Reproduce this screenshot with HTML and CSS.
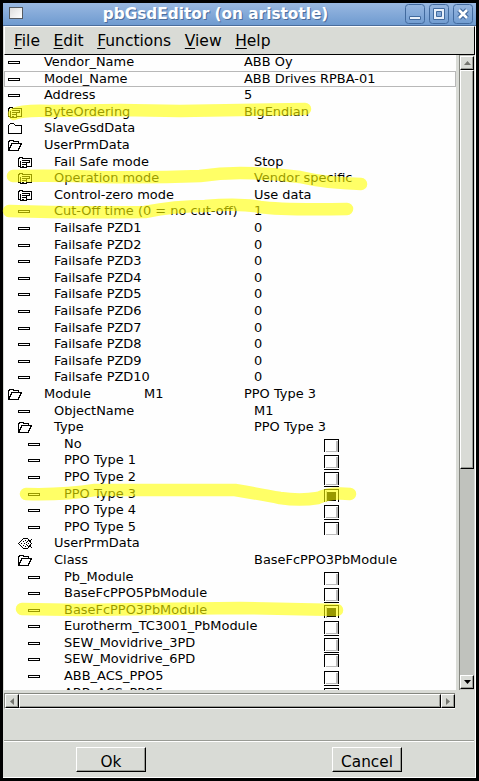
FILE: index.html
```
<!DOCTYPE html>
<html lang="en"><head><meta charset="utf-8"><title>pbGsdEditor</title><link rel="stylesheet" href="styles.css"></head>
<body>
<svg width="0" height="0" class="defs" aria-hidden="true">
<symbol id="leaf" viewBox="0 0 16 14"><path d="M.5 6.500h11v2h-11z"/></symbol>
<symbol id="closed" viewBox="0 0 16 14"><path d="M.5 12.500v-8l2-2h3l2 2h6v8z"/></symbol>
<symbol id="open" viewBox="0 0 16 14"><path d="M.5 12.500v-9h1v-1h4v1h5v2M.5 12.500l3.500-7h9.500l-3.500 7z"/></symbol>
<symbol id="enum" viewBox="0 0 16 14"><path d="M2.500 11.500h-2v-8h1v-1h3v1h9v8h-5M3.500 5.500h8v2h-3M2.500 5.500v7h6v-5h-5M4 9.500h4M4 11.500h2"/></symbol>
<symbol id="eye" viewBox="0 0 16 14"><path d="M.5 7.500l5-5h4l4 5-4 5h-4z"/><path d="M3 7.500h1M5 5.500h1M5 9.500h1M6 7.500h1M7 4.500h1M7 10.500h1M8 6.500h1M8 8.500h1M9 5.500h1M9 9.500h1M10 7.500h1M12 4.500h1M12 10.500h1M13 3.500h1M13 11.500h1"/></symbol>
</svg>
<main class="window">
<header class="titlebar"><i class="app-icon"></i><h1>pbGsdEditor (on aristotle)</h1>
<div class="controls">
<svg viewBox="0 0 20 20"><rect x=".5" y=".5" width="19" height="19" rx="3"/><path class="edge" d="M4.500 12.500h11v3h-11z"/></svg>
<svg viewBox="0 0 20 20"><rect x=".5" y=".5" width="19" height="19" rx="3"/><path class="edge" d="M4.500 4.500h11v11h-11zM7.500 7.500h5v5h-5z"/></svg>
<svg viewBox="0 0 20 20"><rect x=".5" y=".5" width="19" height="19" rx="3"/><path class="under" d="M6 6l8 8M14 6l-8 8"/><path class="cross" d="M6 6l8 8M14 6l-8 8"/></svg>
</div></header>
<nav class="menu"><span><u>F</u>ile</span><span><u>E</u>dit</span><span><u>F</u>unctions</span><span><u>V</u>iew</span><span><u>H</u>elp</span></nav>
<div class="body">
<section class="tree">
<div class="row"><svg><use href="#leaf"/></svg><b>Vendor_Name</b><span>ABB Oy</span></div>
<div class="row current"><svg><use href="#leaf"/></svg><b>Model_Name</b><span>ABB Drives RPBA-01</span></div>
<div class="row"><svg><use href="#leaf"/></svg><b>Address</b><span>5</span></div>
<div class="row"><svg><use href="#enum"/></svg><b>ByteOrdering</b><span>BigEndian</span></div>
<div class="row"><svg><use href="#closed"/></svg><b>SlaveGsdData</b></div>
<div class="row"><svg><use href="#open"/></svg><b>UserPrmData</b></div>
<div class="row l1"><svg><use href="#enum"/></svg><b>Fail Safe mode</b><span>Stop</span></div>
<div class="row l1"><svg><use href="#enum"/></svg><b>Operation mode</b><span>Vendor specific</span></div>
<div class="row l1"><svg><use href="#enum"/></svg><b>Control-zero mode</b><span>Use data</span></div>
<div class="row l1"><svg><use href="#leaf"/></svg><b>Cut-Off time (0 = no cut-off)</b><span>1</span></div>
<div class="row l1"><svg><use href="#leaf"/></svg><b>Failsafe PZD1</b><span>0</span></div>
<div class="row l1"><svg><use href="#leaf"/></svg><b>Failsafe PZD2</b><span>0</span></div>
<div class="row l1"><svg><use href="#leaf"/></svg><b>Failsafe PZD3</b><span>0</span></div>
<div class="row l1"><svg><use href="#leaf"/></svg><b>Failsafe PZD4</b><span>0</span></div>
<div class="row l1"><svg><use href="#leaf"/></svg><b>Failsafe PZD5</b><span>0</span></div>
<div class="row l1"><svg><use href="#leaf"/></svg><b>Failsafe PZD6</b><span>0</span></div>
<div class="row l1"><svg><use href="#leaf"/></svg><b>Failsafe PZD7</b><span>0</span></div>
<div class="row l1"><svg><use href="#leaf"/></svg><b>Failsafe PZD8</b><span>0</span></div>
<div class="row l1"><svg><use href="#leaf"/></svg><b>Failsafe PZD9</b><span>0</span></div>
<div class="row l1"><svg><use href="#leaf"/></svg><b>Failsafe PZD10</b><span>0</span></div>
<div class="row"><svg><use href="#open"/></svg><b class="split"><span>Module</span><span>M1</span></b><span>PPO Type 3</span></div>
<div class="row l1"><svg><use href="#leaf"/></svg><b>ObjectName</b><span>M1</span></div>
<div class="row l1"><svg><use href="#open"/></svg><b>Type</b><span>PPO Type 3</span></div>
<div class="row l2"><svg><use href="#leaf"/></svg><b>No</b><i class="check"></i></div>
<div class="row l2"><svg><use href="#leaf"/></svg><b>PPO Type 1</b><i class="check full"></i></div>
<div class="row l2"><svg><use href="#leaf"/></svg><b>PPO Type 2</b><i class="check full"></i></div>
<div class="row l2"><svg><use href="#leaf"/></svg><b>PPO Type 3</b><i class="check on"></i></div>
<div class="row l2"><svg><use href="#leaf"/></svg><b>PPO Type 4</b><i class="check full"></i></div>
<div class="row l2"><svg><use href="#leaf"/></svg><b>PPO Type 5</b><i class="check"></i></div>
<div class="row l1"><svg><use href="#eye"/></svg><b>UserPrmData</b></div>
<div class="row l1"><svg><use href="#open"/></svg><b>Class</b><span>BaseFcPPO3PbModule</span></div>
<div class="row l2"><svg><use href="#leaf"/></svg><b>Pb_Module</b><i class="check"></i></div>
<div class="row l2"><svg><use href="#leaf"/></svg><b>BaseFcPPO5PbModule</b><i class="check full"></i></div>
<div class="row l2"><svg><use href="#leaf"/></svg><b>BaseFcPPO3PbModule</b><i class="check on"></i></div>
<div class="row l2"><svg><use href="#leaf"/></svg><b>Eurotherm_TC3001_PbModule</b><i class="check full"></i></div>
<div class="row l2"><svg><use href="#leaf"/></svg><b>SEW_Movidrive_3PD</b><i class="check full"></i></div>
<div class="row l2"><svg><use href="#leaf"/></svg><b>SEW_Movidrive_6PD</b><i class="check"></i></div>
<div class="row l2"><svg><use href="#leaf"/></svg><b>ABB_ACS_PPO5</b><i class="check full"></i></div>
<div class="row l2"><svg></svg><b>ABB_ACS_PPO5</b><i class="check"></i></div>
</section>
<div class="vscroll"><i class="btn"><svg viewBox="0 0 7 4"><path fill="#74756f" d="M0 4L3.500 0 7 4z"/></svg></i><i class="thumb"></i><i class="btn last"><svg viewBox="0 0 7 4"><path d="M0 0h7L3.500 4z"/></svg></i></div>
</div>
<div class="hscroll"><i class="btn"><svg viewBox="0 0 4 7"><path fill="#74756f" d="M4 0v7L0 3.500z"/></svg></i><i class="thumb"></i><i class="btn"><svg viewBox="0 0 4 7"><path fill="#74756f" d="M0 0v7l4-3.500z"/></svg></i></div>
<footer><button>Ok</button><button>Cancel</button></footer>
</main>
<svg class="marker" viewBox="0 0 479 781">
<path d="M14 114Q22 110 50 111L120 110 180 111 240 110 305 109"/>
<path d="M13 176Q60 175 100 177Q150 178 200 176Q220 173 240 173Q270 173 300 177Q325 183 361 184"/>
<path d="M9 211Q70 213 145 212Q175 206 205 206Q240 203 260 207Q280 210 347 209"/>
<path d="M26 494Q65 495 95 490H235Q265 495 280 498Q300 501 318 498Q330 492 350 494"/>
<path d="M22 609L80 610 150 609 240 608 337 610"/>
</svg>
</body></html>
```
FILE: styles.css
```
*{box-sizing:border-box}
body{margin:0;background:#000;font-family:"DejaVu Sans",sans-serif;color:#000;height:781px;overflow:hidden;padding:3px}
.defs{position:absolute}
.window{width:473px;height:775px;background:#d9dbd6;border-right:1px solid #fff;border-bottom:1px solid #fff;display:flex;flex-direction:column}
.titlebar{height:23px;width:473px;flex:none;background:linear-gradient(#99b8e1,#6f9bd0);border-bottom:1px solid #4a6d9c;display:flex;align-items:center}
.app-icon{width:14px;height:12px;margin-left:6px;border:1px solid #555b62;background:linear-gradient(135deg,#ddd,#fff);margin-bottom:3px}
h1{flex:1;margin:0 0 1px;text-align:center;font-size:15.300px;line-height:20px;color:#fff;text-shadow:1px 1px 0 #4c6e9d;padding-left:3px}
.controls{display:flex;gap:4px;margin-right:3px}
.controls svg{width:20px;height:20px;fill:none;stroke:#426a9e}
.controls .edge{fill:#e9f0fa;fill-rule:evenodd}
.controls .under{stroke-width:5px}
.controls .cross{stroke:#fff;stroke-width:2.500px}
.menu{height:29px;flex:none;margin-left:1px;border-top:1px solid #fff;border-left:1px solid #fff;border-bottom:1px solid #000;border-right:1px solid #000;display:flex;font-size:15.500px;line-height:28px;padding-left:9px;gap:13.600px}
.menu u{text-underline-offset:2px;text-decoration-thickness:1px}
.body{display:flex;height:635px;flex:none;margin-left:1px}
.tree{width:452px;height:635px;background:#fefefe;overflow:hidden;font-size:12.950px}
.tree .row:first-child{margin-top:-.9px}
.row{height:16.600px;display:flex;align-items:flex-start;padding-left:4px;white-space:nowrap;line-height:16px}
.l1{padding-left:14px}.l2{padding-left:24px}
.row>svg{width:16px;height:14px;margin:1px 20px 0 0;flex:none;fill:none;stroke:#000;stroke-width:1px;shape-rendering:crispEdges}
.row b{font-weight:400;width:200px;flex:none}
.split{display:grid;grid-template-columns:100px 100px}
.current{outline:1px solid #b8b8b8;outline-offset:-1px}
.check{width:15px;height:13px;margin:3px 0 0 60px;border:1px solid #000;border-bottom:0;background:linear-gradient(#bbb,#bbb) 11px 1px/2px 11px no-repeat,linear-gradient(#bbb,#bbb) 1px 11px/12px 1px no-repeat,#fff;flex:none}
.full{box-shadow:0 1px #fefefe,0 2px #000}
.on{background:linear-gradient(#000,#000) 2px 2px/9px 9px no-repeat,linear-gradient(#bbb,#bbb) 1px 1px/1px 11px no-repeat,#fff}
.vscroll{width:15px;margin-left:3px;height:635px;background:#c0c2bd;border-left:1px solid #84867f;padding:1px 0;display:flex;flex-direction:column}
.btn,.thumb{display:flex;align-items:center;justify-content:center;background:#d9dbd6;border:1px solid #fff;border-right-color:#000;border-bottom-color:#000;box-shadow:inset -1px -1px #999b95;flex:none}
.vscroll .btn{width:14px;height:14px}.vscroll .thumb{height:399px}.vscroll .last{margin-top:auto}
.vscroll .btn svg{width:7px;height:4px}
.hscroll{width:451px;height:16px;flex:none;margin:3px 0 0 1px;border-top:1px solid #84867f;border-left:1px solid #84867f;border-bottom:1px solid #fff;display:flex}
.hscroll .btn{width:14px}.hscroll .thumb{flex:1}
.hscroll svg{width:4px;height:7px}
footer{margin:31px 1px 0;height:37px;border-top:1px solid #999b95;box-shadow:inset 0 1px #fff;display:flex;padding:6px 0 0 72px;gap:186px}
button{width:70px;height:25px;flex:none;padding:4px 0 0;background:#d9dbd6;border:1px solid #fff;border-right-color:#000;border-bottom-color:#000;box-shadow:inset -1px -1px #999b95;font:15.300px "DejaVu Sans",sans-serif;color:#000}
.marker{position:absolute;left:0;top:0;width:479px;height:781px;fill:none;stroke:#ff0;stroke-opacity:.6;stroke-width:12.500px;stroke-linecap:round;pointer-events:none}
```
